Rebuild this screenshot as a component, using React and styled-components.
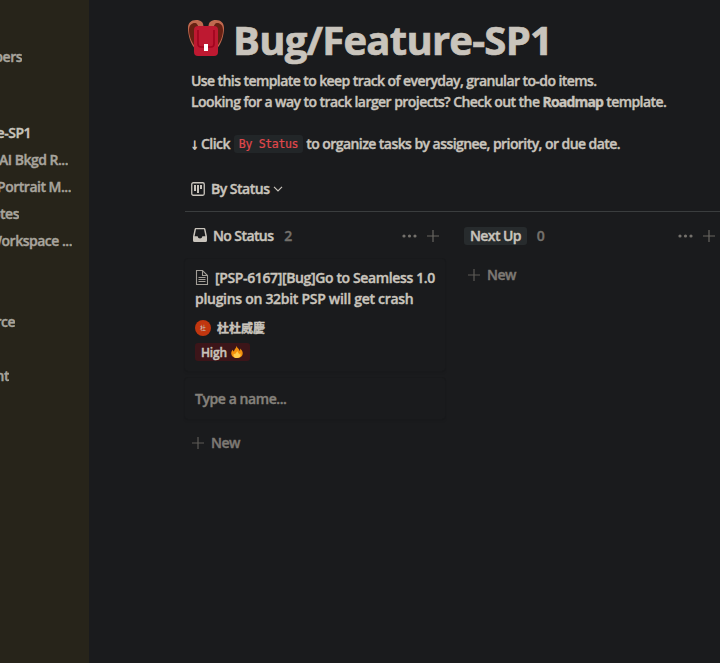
import React from 'react';
import styled, { createGlobalStyle } from 'styled-components';

const Global = createGlobalStyle`
  * { box-sizing: border-box; }
  body { margin: 0; background: #1a1b1d; overflow: hidden; }
`;

const Page = styled.div`
  display: flex;
  width: 720px;
  height: 663px;
  overflow: hidden;
  background: #1a1b1d;
  color: #c9c4bc;
  font-family: "Open Sans", "Noto Sans", "Noto Sans CJK TC", sans-serif;
  font-size: 14px;
  font-weight: 600;
  line-height: 21px;
  letter-spacing: -0.5px;
  white-space: nowrap;
  -webkit-text-stroke: 0.4px currentColor;
`;

const Sidebar = styled.nav`
  flex: none;
  width: 89px;
  height: 100%;
  padding-top: 43px;
  background: #27241a;
  color: #a8a49d;
`;

const SideItem = styled.div`
  display: flex;
  align-items: center;
  justify-content: flex-end;
  overflow: hidden;
  height: 27px;
  width: ${(p) => p.$end}px;
  margin-top: ${(p) => p.$gap || 0}px;
  color: ${(p) => (p.$active ? '#c9c4bc' : 'inherit')};
`;

const Main = styled.main`
  flex: 1;
  min-width: 0;
  padding: 17px 0 0 96px;
  overflow: hidden;
`;

const Header = styled.header`
  display: flex;
  align-items: flex-start;
  height: 46px;
  padding-left: 3px;
`;

const Title = styled.h1`
  margin: 0 0 0 9px;
  font-size: 40px;
  font-weight: 700;
  line-height: 46px;
  letter-spacing: -0.75px;
  -webkit-text-stroke: 0.7px currentColor;
`;

const Intro = styled.section`
  padding: 7px 0 0 6px;
`;

const Line = styled.p`
  display: flex;
  align-items: center;
  height: 21px;
  margin: 0 0 ${(p) => p.$after || 0}px;
  white-space: pre;
  letter-spacing: ${(p) => p.$track ?? -0.56}px;
`;

const Strong = styled.strong`
  font-weight: 700;
  letter-spacing: -0.82px;
`;

const Arrow = styled.span`
  display: flex;
  justify-content: center;
  width: 7px;
  margin-right: 3px;
  font-family: "Liberation Sans", sans-serif;
  font-size: 15px;
  -webkit-text-stroke: 0.8px currentColor;
`;

const Code = styled.code`
  height: 18px;
  margin: 1px 3px 0 4px;
  padding: 0 5px;
  border-radius: 3px;
  background: #222628;
  color: #e0484c;
  font-family: "DejaVu Sans Mono", monospace;
  font-size: 11.5px;
  font-weight: 400;
  line-height: 18px;
  letter-spacing: -0.33px;
  -webkit-text-stroke: 0.2px #e0484c;
`;

const ViewTab = styled.div`
  display: flex;
  align-items: center;
  height: 21px;
  margin-top: 24px;
  padding-left: 6px;
`;

const TabLabel = styled.span`
  margin: 0 4px 0 6px;
`;

const Board = styled.section`
  display: flex;
  gap: 16px;
  width: 536px;
  margin-top: 12px;
  border-top: 1px solid #3a3d3e;
`;

const Column = styled.div`
  flex: none;
  width: 260px;
`;

const ColumnHead = styled.div`
  display: flex;
  align-items: center;
  height: 47px;
  padding: 0 6px 1px ${(p) => p.$left}px;
`;

const ColumnName = styled.span`
  margin-left: 6px;
  letter-spacing: -0.6px;
`;

const Count = styled.span`
  flex: 1;
  margin-left: ${(p) => p.$gap}px;
  color: #74716c;
`;

const StatusPill = styled.span`
  height: 18px;
  margin-top: 1px;
  padding: 0 6px;
  border-radius: 3px;
  background: #272b2d;
  line-height: 18px;
  letter-spacing: -0.6px;
`;

const HeadActions = styled.div`
  display: flex;
  align-items: center;
  gap: 10px;
  margin-top: 1px;
`;

const Card = styled.article`
  height: ${(p) => p.$height}px;
  margin-bottom: 7px;
  padding: 8px 0 0 10px;
  border-radius: 3px;
  box-shadow: 0 0 0 1px #18191b, 0 2px 3px rgba(0, 0, 0, 0.08);
`;

const CardTitle = styled.div`
  letter-spacing: -0.37px;
`;

const TitleRow = styled.div`
  display: flex;
  align-items: center;
  gap: 7px;
  height: 21px;
`;

const TitleTail = styled.div`
  letter-spacing: -0.29px;
`;

const Person = styled.div`
  display: flex;
  align-items: center;
  gap: 6px;
  height: 17px;
  margin-top: 10px;
  font-family: "Noto Sans CJK TC", sans-serif;
  font-size: 12px;
  font-weight: 700;
  letter-spacing: 0;
`;

const Avatar = styled.span`
  width: 16px;
  height: 16px;
  border-radius: 50%;
  background: #c1360f;
  font-size: 6px;
  font-weight: 400;
  line-height: 16px;
  text-align: center;
  -webkit-text-stroke: 0;
`;

const Priority = styled.div`
  display: flex;
  align-items: center;
  gap: 4px;
  width: 55px;
  height: 18px;
  margin-top: 7px;
  padding: 0 6px;
  border-radius: 3px;
  background: #3c1519;
  font-size: 12px;
  letter-spacing: -0.15px;
  line-height: 18px;
`;

const Label = styled.span`
  padding-top: 1px;
`;

const Placeholder = styled.div`
  padding-top: 2px;
  color: #85817b;
  letter-spacing: -0.43px;
`;

const NewButton = styled.div`
  display: flex;
  align-items: center;
  gap: 7px;
  height: 31px;
  margin-top: ${(p) => p.$drop || 0}px;
  padding-left: 7px;
  color: #7d7974;
`;

const Icon = styled.svg`
  display: block;
  flex: none;
  overflow: visible;
`;

const RaisedIcon = styled(Icon)`
  margin-top: 3px;
`;

const Backpack = () => (
  <RaisedIcon width="36" height="36" viewBox="0 0 36 36" fill="none">
    <path d="M8 0C13 0 15.500 2 15.500 7H10C9.500 3 4.500 3 3.500 8C2 15 4 22 8 27V30C2.500 24 0 15 0 8C0 3 3 0 8 0Z" fill="#c1694f" />
    <path d="M28 0C23 0 20.500 2 20.500 7H26C26.500 3 31.500 3 32.500 8C34 15 32 22 28 27V30C33.500 24 36 15 36 8C36 3 33 0 28 0Z" fill="#c1694f" />
    <path d="M1 10C1 5 4 3 6.500 3C9 3 10.500 5 9 8C5.500 13 6 21 8 28C3 22 1 15 1 10ZM35 10C35 5 32 3 29.500 3C27 3 25.500 5 27 8C30.500 13 30 21 28 28C33 22 35 15 35 10Z" fill="#662113" />
    <rect x="6" y="6" width="24" height="30" rx="4" fill="#be1931" />
    <path d="M10 10V24Q10 27 13 27H23Q26 27 26 24V10" stroke="#a0041e" strokeWidth="1.6" />
    <rect x="16" y="24" width="4" height="7" fill="#fff" />
  </RaisedIcon>
);

const BoardIcon = () => (
  <Icon width="14" height="14" viewBox="0 0 14 14">
    <rect x=".75" y=".75" width="12.5" height="12.5" rx="1.5" fill="none" stroke="#c9c4bc" strokeWidth="1.3" />
    <path d="M3 3h2v6H3zM6 3h2v8H6zM9 3h2v4H9z" fill="#c9c4bc" />
  </Icon>
);

const Chevron = () => (
  <Icon width="10" height="6" viewBox="0 0 10 6" fill="none" stroke="#c9c4bc" strokeWidth="1.2">
    <path d="M1 .8L5 4.8L9 .8" />
  </Icon>
);

const Inbox = () => (
  <Icon width="14" height="14" viewBox="0 0 14 14">
    <path
      fill="#c9c4bc"
      fillRule="evenodd"
      d="M2.800 0H11.200Q12.200 0 12.400 1L14 8.500V12.500Q14 14 12.500 14H1.500Q0 14 0 12.500V8.500L1.600 1Q1.800 0 2.800 0ZM3 1.300L1.600 8.300H4.600Q5 10.600 7 10.600Q9 10.600 9.400 8.300H12.400L11 1.300Z"
    />
  </Icon>
);

const Dots = () => (
  <Icon width="15" height="4" viewBox="0 0 15 4" fill="#74716c">
    <circle cx="2" cy="2" r="1.6" />
    <circle cx="7.5" cy="2" r="1.6" />
    <circle cx="13" cy="2" r="1.6" />
  </Icon>
);

const Plus = ({ color = '#5c5a56' }) => (
  <Icon width="12" height="12" viewBox="0 0 12 12" stroke={color} strokeWidth="1.2">
    <path d="M6 0V12M0 6H12" />
  </Icon>
);

const PageIcon = () => (
  <Icon width="13" height="15" viewBox="0 0 13 15" fill="none" stroke="#a29e97" strokeWidth="1.1">
    <path d="M1.500 .5H7.500L12.500 5.500V14.500H1.500ZM7.500 .8V5.500H12.500M3.500 7.500H10.500M3.500 9.500H10.500M3.500 11.500H10.500" />
  </Icon>
);

const Fire = () => (
  <Icon width="12" height="12" viewBox="0 0 12 12">
    <path d="M5.6 0C6 2.2 8.6 3 8.7 5C9.4 4.6 9.3 3.4 9 2.6C11 4 12 6 11.7 8C11.4 10.5 9 12 6 12C3 12 .6 10.5 .3 8C0 6.2 .8 4.6 2 3.8C2 4.8 2.4 5.3 3 5.4C3.2 3.4 5.3 2.2 5.6 0Z" fill="#f4900c" />
    <path d="M6.2 5C6.8 6.6 8 7 8 8.4C8.7 8.2 9 7.6 9 7C10.4 9 9.4 12 6 12C2.8 12 1.8 9.4 3 7.4C3.3 8 3.7 8.3 4.2 8.2C4.2 7 5.8 6.6 6.2 5Z" fill="#ffcc4d" />
  </Icon>
);

const sideItems = [
  { text: 'bers', end: 22 },
  { text: 'e-SP1', end: 31, gap: 49, active: true },
  { text: 'AI Bkgd R...', end: 68 },
  { text: 'Portrait M...', end: 71 },
  { text: 'otes', end: 19 },
  { text: 'Workspace ...', end: 72 },
  { text: 'rce', end: 15, gap: 54 },
  { text: 'nt', end: 9, gap: 27 },
];

const Actions = () => (
  <HeadActions>
    <Dots />
    <Plus color="#686661" />
  </HeadActions>
);

export default function App() {
  return (
    <Page>
      <Global />
      <Sidebar>
        {sideItems.map((s) => (
          <SideItem key={s.text} $end={s.end} $gap={s.gap} $active={s.active}>
            {s.text}
          </SideItem>
        ))}
      </Sidebar>
      <Main>
        <Header>
          <Backpack />
          <Title>Bug/Feature-SP1</Title>
        </Header>
        <Intro>
          <Line $track={-0.58}>Use this template to keep track of everyday, granular to-do items.</Line>
          <Line $after={21}>
            <span>Looking for a way to track larger projects? Check out the </span>
            <Strong>Roadmap</Strong>
            <span> template.</span>
          </Line>
          <Line>
            <Arrow>↓</Arrow>
            <span>Click</span>
            <Code>By Status</Code>
            <span>to organize tasks by assignee, priority, or due date.</span>
          </Line>
        </Intro>
        <ViewTab>
          <BoardIcon />
          <TabLabel>By Status</TabLabel>
          <Chevron />
        </ViewTab>
        <Board>
          <Column>
            <ColumnHead $left={8}>
              <Inbox />
              <ColumnName>No Status</ColumnName>
              <Count $gap={11}>2</Count>
              <Actions />
            </ColumnHead>
            <Card $height={112}>
              <CardTitle>
                <TitleRow>
                  <PageIcon />
                  <span>[PSP-6167][Bug]Go to Seamless 1.0</span>
                </TitleRow>
                <TitleTail>plugins on 32bit PSP will get crash</TitleTail>
              </CardTitle>
              <Person>
                <Avatar>杜</Avatar>
                <span>杜杜威慶</span>
              </Person>
              <Priority>
                <Label>High</Label>
                <Fire />
              </Priority>
            </Card>
            <Card $height={41}>
              <Placeholder>Type a name...</Placeholder>
            </Card>
            <NewButton $drop={8}>
              <Plus />
              <span>New</span>
            </NewButton>
          </Column>
          <Column>
            <ColumnHead $left={3}>
              <StatusPill>Next Up</StatusPill>
              <Count $gap={10}>0</Count>
              <Actions />
            </ColumnHead>
            <NewButton>
              <Plus />
              <span>New</span>
            </NewButton>
          </Column>
        </Board>
      </Main>
    </Page>
  );
}
